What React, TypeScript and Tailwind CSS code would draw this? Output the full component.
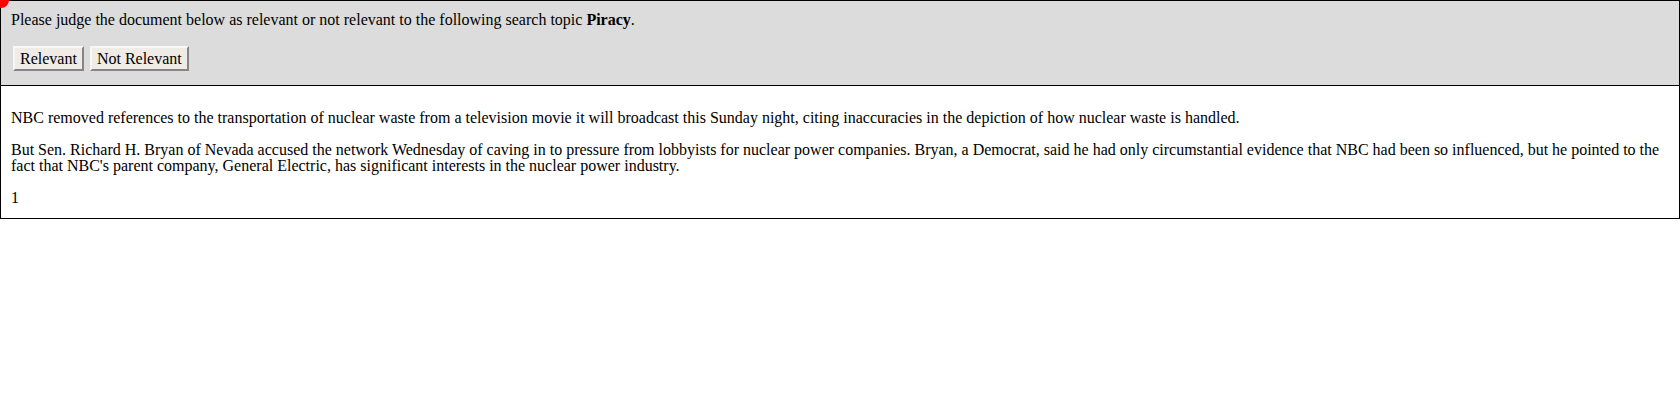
export default function App() {
  return (
    <div className="relative w-full text-black text-[16px] leading-[16px] font-['Liberation_Serif','Times_New_Roman',serif]">
      <span className="absolute -left-[7px] -top-[8px] w-[16px] h-[16px] rounded-full bg-[#ff0000]" />
      <div className="border border-black bg-[#dcdcdc] px-[10px] pt-[11px] pb-[14px]">
        <p>
          Please judge the document below as relevant or not relevant to the following search topic{' '}
          <b>Piracy</b>.
        </p>
        <div className="mt-[18px] flex gap-[6px] pl-[2px]">
          <button className="h-[25px] px-[5px] bg-[#efebe7] border-2 border-t-[#f7f7f7] border-l-[#f7f7f7] border-b-[#858585] border-r-[#858585]">
            Relevant
          </button>
          <button className="h-[25px] px-[5px] bg-[#efebe7] border-2 border-t-[#f7f7f7] border-l-[#f7f7f7] border-b-[#858585] border-r-[#858585]">
            Not Relevant
          </button>
        </div>
      </div>
      <div className="border border-t-0 border-black px-[10px] pt-[16px] pb-[12px]">
        <p className="mt-[8px]">
          NBC removed references to the transportation of nuclear waste from a television movie it will broadcast this
          Sunday night, citing inaccuracies in the depiction of how nuclear waste is handled.
        </p>
        <p className="mt-[16px]">
          But Sen. Richard H. Bryan of Nevada accused the network Wednesday of caving in to pressure from lobbyists for
          nuclear power companies. Bryan, a Democrat, said he had only circumstantial evidence that NBC had been so
          influenced, but he pointed to the fact that NBC's parent company, General Electric, has significant interests
          in the nuclear power industry.
        </p>
        <p className="mt-[16px]">1</p>
      </div>
    </div>
  );
}
